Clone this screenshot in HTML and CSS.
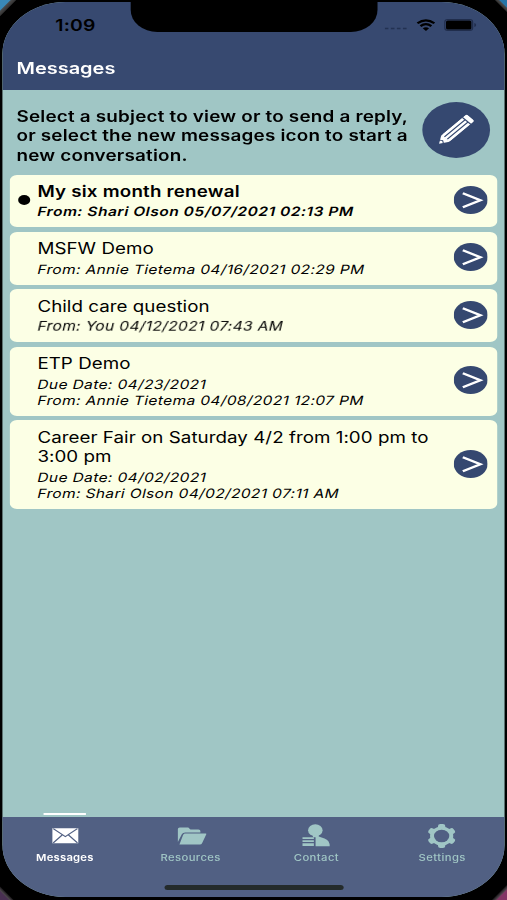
FILE: index.html
```html
<!DOCTYPE html>
<html lang="en">
<head>
    <meta charset="UTF-8">
    <meta name="viewport" content="width=device-width, initial-scale=1.0">
    <title>Messages</title>
    <link rel="stylesheet" href="styles.css">
</head>
<body>
    <div class="phone">
        <div class="screen">
            <div class="notch"></div>

            <header class="header">
                <div class="status-bar">
                    <span class="time">1:09</span>
                    <div class="status-icons">
                        <svg class="dots" width="19" height="3" viewBox="0 0 19 3"><path d="M0 1.5h3M5 1.5h3M10 1.5h3M15 1.5h3" stroke="#233252" stroke-width="1.6"/></svg>
                        <svg class="wifi" width="16" height="12" viewBox="0 0 16 12" fill="none" stroke="#000" stroke-width="2.1"><path d="M1 4.3Q8-1.7 15 4.3M3.5 7.1Q8 3.2 12.5 7.1"/><path d="M5.4 9.3Q8 7 10.6 9.3L8 12z" fill="#000" stroke="none"/></svg>
                        <svg class="battery" width="27" height="12" viewBox="0 0 27 12"><rect x=".6" y=".6" width="23" height="10.8" rx="2.5" fill="none" stroke="#202d4c"/><rect x="1.6" y="1.6" width="21" height="8.8" rx="1.5"/><path d="M25 4v4q1.5-.5 1.5-2T25 4" fill="#202d4c"/></svg>
                    </div>
                </div>
                <h1>Messages</h1>
            </header>

            <main class="content">
                <div class="intro">
                    <p>Select a subject to view or to send a reply,<br>or select the new messages icon to start a<br>new conversation.</p>
                    <button class="new-message" aria-label="New message">
                        <svg width="32" height="32" viewBox="0 0 32 32">
                            <g transform="translate(16 15.5) rotate(-45)">
                                <path d="M-20 0L-12.5-4.8V4.8z" fill="#fff"/>
                                <path d="M-17.2-2.2L-15.8 0l-1.4 2.2" fill="none" stroke="#354870" stroke-width=".9"/>
                                <path d="M-13-4.8H17V4.8H-13z" fill="#fff" clip-path="inset(0 round 2px)"/>
                                <path d="M-12-1.7H12M-12 1.7H12" stroke="#354870" stroke-width="1.1"/>
                                <path d="M12.2-5V5" stroke="#354870" stroke-width="1.2"/>
                            </g>
                        </svg>
                    </button>
                </div>

                <ul class="message-list">
                    <li class="message unread">
                        <div class="message-text">
                            <h2>My six month renewal</h2>
                            <p>From: Shari Olson 05/07/2021 02:13 PM</p>
                        </div>
                        <svg class="arrow" width="28" height="28" viewBox="0 0 28 28"><circle cx="14" cy="14" r="14"/><path d="M7.5 7.2L22 14.2 7.5 21.2"/></svg>
                    </li>
                    <li class="message">
                        <div class="message-text">
                            <h2>MSFW Demo</h2>
                            <p>From: Annie Tietema 04/16/2021 02:29 PM</p>
                        </div>
                        <svg class="arrow" width="28" height="28" viewBox="0 0 28 28"><circle cx="14" cy="14" r="14"/><path d="M7.5 7.2L22 14.2 7.5 21.2"/></svg>
                    </li>
                    <li class="message">
                        <div class="message-text">
                            <h2>Child care question</h2>
                            <p>From: You 04/12/2021 07:43 AM</p>
                        </div>
                        <svg class="arrow" width="28" height="28" viewBox="0 0 28 28"><circle cx="14" cy="14" r="14"/><path d="M7.5 7.2L22 14.2 7.5 21.2"/></svg>
                    </li>
                    <li class="message">
                        <div class="message-text">
                            <h2>ETP Demo</h2>
                            <p>Due Date: 04/23/2021</p>
                            <p>From: Annie Tietema 04/08/2021 12:07 PM</p>
                        </div>
                        <svg class="arrow" width="28" height="28" viewBox="0 0 28 28"><circle cx="14" cy="14" r="14"/><path d="M7.5 7.2L22 14.2 7.5 21.2"/></svg>
                    </li>
                    <li class="message">
                        <div class="message-text">
                            <h2>Career Fair on Saturday 4/2 from 1:00 pm to<br>3:00 pm</h2>
                            <p>Due Date: 04/02/2021</p>
                            <p>From: Shari Olson 04/02/2021 07:11 AM</p>
                        </div>
                        <svg class="arrow" width="28" height="28" viewBox="0 0 28 28"><circle cx="14" cy="14" r="14"/><path d="M7.5 7.2L22 14.2 7.5 21.2"/></svg>
                    </li>
                </ul>
            </main>

            <nav class="tabs">
                <a class="tab active">
                    <svg width="28" height="26" viewBox="0 0 28 26"><path d="M3.3 5.2h21.4v15H3.3z" fill="#fff"/><path d="M4 5.6l10 8 10-8M4 19.8l7.5-8M24 19.8l-7.5-8" fill="none" stroke="#516083" stroke-width="1.2"/></svg>
                    <span>Messages</span>
                </a>
                <a class="tab">
                    <svg width="28" height="26" viewBox="0 0 28 26" fill="#a0c6c5"><path d="M3 19V6q0-1.6 1.6-1.6h7l1.8 2H20q1.6 0 1.6 1.6v1.4H9q-1.8 0-2.6 1.7z"/><path d="M9.3 10.5H26q.8 0 .5.8L23 20.2q-.5 1.3-1.8 1.3H4.3l3-9.6q.5-1.4 2-1.4z"/></svg>
                    <span>Resources</span>
                </a>
                <a class="tab">
                    <svg width="28" height="26" viewBox="0 0 28 26" fill="#a0c6c5"><circle cx="13.6" cy="7.3" r="6"/><path d="M11.6 10h4.8v3.5l4.8 2q4.3 1.8 4.3 7.8H13.8v-9h-2.2z"/><path d="M3 14.3h9.4v1.8H3zm0 3h9.4v1.8H3zm0 3h9.4v2.6H3z"/></svg>
                    <span>Contact</span>
                </a>
                <a class="tab">
                    <svg width="28" height="26" viewBox="0 0 28 26">
                        <g fill="none" stroke="#a0c6c5" stroke-width="4" stroke-linejoin="round">
                            <path d="M13 3h2v3h-2zM13 20h2v3h-2z"/>
                            <path d="M13 3h2v3h-2zM13 20h2v3h-2z" transform="rotate(60 14 13)"/>
                            <path d="M13 3h2v3h-2zM13 20h2v3h-2z" transform="rotate(120 14 13)"/>
                            <circle cx="14" cy="13" r="7.8" stroke-width="3.6"/>
                        </g>
                        <circle cx="14" cy="13" r="6.3" fill="#516083"/>
                    </svg>
                    <span>Settings</span>
                </a>
            </nav>
            <div class="home-bar"></div>
        </div>
    </div>
</body>
</html>
```

FILE: styles.css
```css
* {
    box-sizing: border-box;
}

body {
    margin: 0;
    height: 900px;
    overflow: hidden;
    font-family: Inter, "Liberation Sans", sans-serif;
    color: #000;
    background:
        linear-gradient(135deg, #3989b8 7px, #49494a 8px, #343434 11px, transparent 12px),
        linear-gradient(225deg, #2674a7 5px, #49494a 6px, #343434 8px, transparent 9px),
        linear-gradient(45deg, #493052 6px, #4c454b 7px, #252225 9px, transparent 10px),
        linear-gradient(315deg, #843565 7px, #51454d 8px, #252225 10px, transparent 11px),
        #000;
}

h1,
h2,
p,
ul {
    margin: 0;
    padding: 0;
}

/* the whole phone is drawn wider than it is laid out */
.phone {
    width: 419px;
    height: 900px;
    padding: 1.5px 1.65px 3px;
    transform: scaleX(1.21);
    transform-origin: 0 0;
}

.screen {
    position: relative;
    display: flex;
    flex-direction: column;
    height: 100%;
    border-radius: 52px;
    background-color: #a0c6c5;
    overflow: hidden;
}

.notch {
    position: absolute;
    top: -2px;
    left: 106px;
    width: 204px;
    height: 32.5px;
    border-radius: 0 0 22px 22px;
    background-color: #000;
}

.header {
    height: 88px;
    background-color: #374970;
}

.status-bar {
    display: flex;
    justify-content: space-between;
    height: 48px;
    padding: 13px 23.5px 0 44px;
}

.time {
    font-size: 16px;
    line-height: 20px;
    font-weight: 600;
    letter-spacing: 0.2px;
}

.status-icons {
    display: flex;
    align-items: center;
    gap: 7px;
    height: 20px;
}

.dots {
    margin-top: 8px;
}

.header h1 {
    padding-left: 12px;
    font-size: 16.5px;
    line-height: 37px;
    font-weight: 600;
    color: #fff;
}

.content {
    flex: 1;
    padding: 12.5px 6.6px 0;
}

.intro {
    display: flex;
    justify-content: space-between;
    height: 72.5px;
    padding: 0 6px 0 5.4px;
}

.intro p {
    padding-top: 4.5px;
    font-size: 15.6px;
    line-height: 19.5px;
    font-weight: 600;
    letter-spacing: 0.16px;
    white-space: nowrap;
}

.new-message {
    display: flex;
    align-items: center;
    justify-content: center;
    flex: none;
    width: 56px;
    height: 56px;
    padding: 0;
    border: none;
    border-radius: 50%;
    background-color: #354870;
}

.message-list {
    display: flex;
    flex-direction: column;
    gap: 4.5px;
    list-style: none;
}

.message {
    position: relative;
    display: flex;
    align-items: center;
    justify-content: space-between;
    padding: 0 7.5px 0 22.7px;
    border-radius: 6px;
    background-color: #fcffe5;
}

.message-text {
    padding: 7.3px 0 7.2px;
}

.message h2 {
    margin-bottom: 3px;
    font-size: 15.5px;
    line-height: 19.5px;
    font-weight: 400;
    letter-spacing: 0.03px;
    white-space: nowrap;
}

/* slanted upright letters, the real italic has a different "a" */
.message p {
    font-size: 12.8px;
    line-height: 16px;
    letter-spacing: 0.31px;
    white-space: nowrap;
    transform: skewX(-11deg);
}

.unread h2,
.message.unread p {
    font-weight: 600;
}

.unread h2 {
    letter-spacing: 0.17px;
}

.message.unread p {
    letter-spacing: 0.44px;
}

.unread::before {
    content: "";
    position: absolute;
    left: 7px;
    top: 20.5px;
    width: 10px;
    height: 10px;
    border-radius: 50%;
    background-color: #000;
}

.arrow {
    flex: none;
    margin-bottom: 2px;
    fill: #354870;
}

.arrow path {
    fill: none;
    stroke: #fff;
    stroke-width: 2.3;
}

.tabs {
    display: flex;
    height: 80px;
    background-color: #516083;
}

.tab {
    position: relative;
    display: flex;
    flex-direction: column;
    align-items: center;
    flex: 1;
    padding-top: 5.5px;
    font-size: 9.3px;
    line-height: 14px;
    font-weight: 500;
    letter-spacing: 0.35px;
    color: #a0c6c5;
}

.tab span {
    margin-top: 2px;
}

.active {
    font-weight: 600;
    letter-spacing: 0.2px;
    color: #fff;
}

.active::before {
    content: "";
    position: absolute;
    top: -4px;
    width: 35px;
    height: 2px;
    background-color: #fff;
}

.home-bar {
    position: absolute;
    left: 134px;
    bottom: 7.5px;
    width: 148px;
    height: 5px;
    border-radius: 3px;
    background-color: #242b2b;
}
```
